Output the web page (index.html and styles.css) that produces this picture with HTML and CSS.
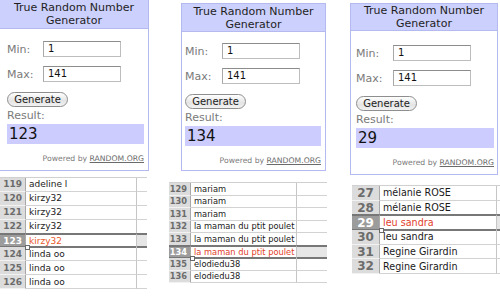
FILE: index.html
```html
<!DOCTYPE html>
<html lang="fr">
<head>
<meta charset="utf-8">
<title>True Random Number Generator</title>
<link rel="stylesheet" href="styles.css">
</head>
<body>
<div class="collage">
  <div class="col col-1">
    <div class="rng rng-1">
      <div class="rng-title">True Random Number<br>Generator</div>
      <div class="rng-body">
        <div class="field"><span class="field-label">Min:</span><span class="field-input">1</span></div>
        <div class="field"><span class="field-label">Max:</span><span class="field-input">141</span></div>
        <span class="btn">Generate</span>
        <div class="result-label">Result:</div>
        <div class="result">123</div>
        <div class="powered">Powered by <span class="link">RANDOM.ORG</span></div>
      </div>
    </div>
    <div class="sheet sheet-1">
      <div class="srow"><div class="rh">119</div><div class="cell">adeline l</div><div class="cell-x"></div></div>
      <div class="srow"><div class="rh">120</div><div class="cell">kirzy32</div><div class="cell-x"></div></div>
      <div class="srow"><div class="rh">121</div><div class="cell">kirzy32</div><div class="cell-x"></div></div>
      <div class="srow"><div class="rh">122</div><div class="cell">kirzy32</div><div class="cell-x"></div></div>
      <div class="srow sel"><div class="rh">123</div><div class="cell">kirzy32<span class="handle"></span></div><div class="cell-x"></div></div>
      <div class="srow"><div class="rh">124</div><div class="cell">linda oo</div><div class="cell-x"></div></div>
      <div class="srow"><div class="rh">125</div><div class="cell">linda oo</div><div class="cell-x"></div></div>
      <div class="srow"><div class="rh">126</div><div class="cell">linda oo</div><div class="cell-x"></div></div>
    </div>
  </div>

  <div class="col col-2">
    <div class="rng rng-2">
      <div class="rng-title">True Random Number<br>Generator</div>
      <div class="rng-body">
        <div class="field"><span class="field-label">Min:</span><span class="field-input">1</span></div>
        <div class="field"><span class="field-label">Max:</span><span class="field-input">141</span></div>
        <span class="btn">Generate</span>
        <div class="result-label">Result:</div>
        <div class="result">134</div>
        <div class="powered">Powered by <span class="link">RANDOM.ORG</span></div>
      </div>
    </div>
    <div class="sheet sheet-2">
      <div class="srow"><div class="rh">129</div><div class="cell">mariam</div><div class="cell-x"></div></div>
      <div class="srow"><div class="rh">130</div><div class="cell">mariam</div><div class="cell-x"></div></div>
      <div class="srow"><div class="rh">131</div><div class="cell">mariam</div><div class="cell-x"></div></div>
      <div class="srow"><div class="rh">132</div><div class="cell">la maman du ptit poulet</div><div class="cell-x"></div></div>
      <div class="srow"><div class="rh">133</div><div class="cell">la maman du ptit poulet</div><div class="cell-x"></div></div>
      <div class="srow sel"><div class="rh">134</div><div class="cell">la maman du ptit poulet<span class="handle"></span></div><div class="cell-x"></div></div>
      <div class="srow"><div class="rh">135</div><div class="cell">elodiedu38</div><div class="cell-x"></div></div>
      <div class="srow"><div class="rh">136</div><div class="cell">elodiedu38</div><div class="cell-x"></div></div>
    </div>
  </div>

  <div class="col col-3">
    <div class="rng rng-3">
      <div class="rng-title">True Random Number<br>Generator</div>
      <div class="rng-body">
        <div class="field"><span class="field-label">Min:</span><span class="field-input">1</span></div>
        <div class="field"><span class="field-label">Max:</span><span class="field-input">141</span></div>
        <span class="btn">Generate</span>
        <div class="result-label">Result:</div>
        <div class="result">29</div>
        <div class="powered">Powered by <span class="link">RANDOM.ORG</span></div>
      </div>
    </div>
    <div class="sheet sheet-3">
      <div class="srow"><div class="rh">27</div><div class="cell">mélanie ROSE</div><div class="cell-x"></div></div>
      <div class="srow"><div class="rh">28</div><div class="cell">mélanie ROSE</div><div class="cell-x"></div></div>
      <div class="srow sel"><div class="rh">29</div><div class="cell">leu sandra<span class="handle"></span></div><div class="cell-x"></div></div>
      <div class="srow"><div class="rh">30</div><div class="cell">leu sandra</div><div class="cell-x"></div></div>
      <div class="srow"><div class="rh">31</div><div class="cell">Regine Girardin</div><div class="cell-x"></div></div>
      <div class="srow"><div class="rh">32</div><div class="cell">Regine Girardin</div><div class="cell-x"></div></div>
    </div>
  </div>
</div>
</body>
</html>
```

FILE: styles.css
```css
* { box-sizing: border-box; }

html, body {
  margin: 0;
  padding: 0;
  background: #ffffff;
}

body {
  width: 500px;
  height: 297px;
  overflow: hidden;
  font-family: "DejaVu Sans", Verdana, sans-serif;
  color: #222;
}

.collage {
  display: flex;
  align-items: flex-start;
}

.col {
  display: flex;
  flex-direction: column;
  flex: none;
}

.col-1 { width: 151px; margin-left: -1px; }
.col-2 { width: 158px; margin-left: 19px; }
.col-3 { width: 150px; margin-left: 23px; }

/* ---------- random.org widget ---------- */
.rng {
  border: 1px solid #b4baf0;
  background: #fff;
  display: flex;
  flex-direction: column;
}

.rng-1 { width: 150px; height: 172px; margin-top: -1px; }
.rng-2 { width: 145px; height: 168px; margin-top: 3px; margin-left: 12px; }
.rng-3 { width: 148px; height: 172px; margin-top: 3px; }

.rng-title {
  background: #ccd0fc;
  border-bottom: 1px solid #b4baf0;
  text-align: center;
  font-size: 11px;
  line-height: 13px;
  color: #1e1e1e;
  display: flex;
  align-items: center;
  justify-content: center;
}

.rng-1 .rng-title { height: 29px; }
.rng-2 .rng-title { height: 28px; }
.rng-3 .rng-title { height: 27px; }

.rng-body {
  display: flex;
  flex-direction: column;
  align-items: flex-start;
  padding-right: 4px;
}

.rng-1 .rng-body { padding-top: 12px; padding-left: 7px; }
.rng-2 .rng-body { padding-top: 11px; padding-left: 3px; }
.rng-3 .rng-body { padding-top: 14px; padding-left: 5px; padding-right: 3px; }

.field {
  display: flex;
  align-items: center;
  height: 16px;
  margin-bottom: 9px;
}

.field-label {
  width: 36px;
  font-size: 11px;
  color: #7a7a7a;
}

.rng-2 .field-label,
.rng-3 .field-label { width: 37px; }

.field-input {
  width: 78px;
  height: 16px;
  border: 1px solid #bdbdbd;
  border-top-color: #8c8c8c;
  border-left-color: #a8a8a8;
  padding-left: 4px;
  font-size: 10px;
  line-height: 14px;
  color: #111;
}

.btn {
  margin-top: 1px;
  height: 15px;
  width: 61px;
  border: 1px solid #8e8e8e;
  border-radius: 8px;
  background: linear-gradient(#ffffff, #e4e4e4 60%, #f2f2f2);
  font-size: 10px;
  line-height: 13px;
  text-align: center;
  color: #222;
}

.result-label {
  margin-top: 3px;
  font-size: 11px;
  line-height: 12px;
  color: #7a7a7a;
}

.result {
  margin-top: 2px;
  align-self: stretch;
  height: 20px;
  background: #ccccfe;
  font-size: 15px;
  line-height: 20px;
  padding-left: 2px;
  color: #111;
}

.powered {
  margin-top: 10px;
  align-self: flex-end;
  font-size: 7.7px;
  line-height: 10px;
  color: #7c7c7c;
}

.powered .link {
  text-decoration: underline;
  color: #6a6a6a;
}

/* ---------- spreadsheet excerpts ---------- */
.sheet {
  display: flex;
  flex-direction: column;
  border-top: 1px solid #d0d0d0;
}

.sheet-1 { width: 147px; margin-top: 6px; margin-left: 1px; --rh: 13.9px; --hw: 26px; --cw: 111px; font-size: 9px; }
.sheet-2 { width: 158px; margin-top: 11px; --rh: 12.5px; --hw: 22px; --cw: 106px; font-size: 8.3px; }
.sheet-3 { width: 150px; margin-top: 10px; margin-left: 2px; --rh: 14.7px; --hw: 28px; --cw: 117px; font-size: 9.6px; }

.srow {
  display: flex;
  height: var(--rh);
}

.rh {
  flex: none;
  width: var(--hw);
  background: #dcdcdc;
  color: #6c6c6c;
  font-weight: bold;
  border-bottom: 1px solid #f2f2f2;
  border-right: 1px solid #a8a8a8;
  display: flex;
  align-items: center;
  justify-content: flex-end;
  padding-right: 3px;
}

.sheet-3 .rh { font-size: 12px; justify-content: center; padding-right: 0; }

.cell {
  position: relative;
  flex: none;
  width: var(--cw);
  border-bottom: 1px solid #d2d2d2;
  border-right: 1px solid #c6c6c6;
  padding-left: 3px;
  display: flex;
  align-items: center;
  color: #1a1a1a;
  white-space: nowrap;
}

.cell-x {
  flex: 1;
  border-bottom: 1px solid #d2d2d2;
}

.srow.sel {
  margin-top: -1px;
  height: calc(var(--rh) + 2px);
  margin-bottom: -1px;
}

.sel .rh {
  background: #9c9c9c;
  color: #ffffff;
  border-top: 2px solid #777;
  border-bottom: 2px solid #777;
}

.sel .cell {
  border-top: 2px solid #777;
  border-bottom: 2px solid #777;
  color: #e2402c;
}

.sheet-1 .sel .cell { color: #ea5a28; }

.sel .cell-x {
  background: #e6e6e6;
  border-top: 2px solid #777;
  border-bottom: 2px solid #777;
}

.handle {
  position: absolute;
  left: -1px;
  bottom: -4px;
  width: 5px;
  height: 5px;
  background: #ffffff;
  border: 1px solid #6a6a6a;
}
```
